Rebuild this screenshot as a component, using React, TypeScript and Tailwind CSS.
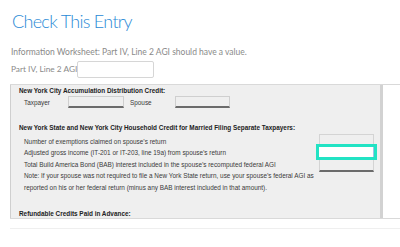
const rows = [
  'Number of exemptions claimed on spouse\u2019s return',
  'Adjusted gross income (IT-201 or IT-203, line 19a) from spouse\u2019s return',
  'Total Build America Bond (BAB) interest included in the spouse\u2019s recomputed federal AGI',
]

function GrayInput({ className }: { className?: string }) {
  return (
    <div
      className={`h-[12px] border border-[#cfcfcf] border-b-2 border-b-[#6b6b6b] bg-[#efefef] ${className ?? ''}`}
    />
  )
}

export default function App() {
  return (
    <div className="h-[247px] w-[400px] overflow-hidden bg-white">
      <h1 className="pl-3 pt-[9px] font-['Lato',sans-serif] text-[18px] font-light leading-[24px] tracking-[-0.7px] text-[#2a8ad6]">
        Check This Entry
      </h1>
      <p className="mt-[14px] pl-[11px] font-['Lato',sans-serif] text-[8.5px] leading-[10px] text-[#8a8a8a]">
        Information Worksheet: Part IV, Line 2 AGI should have a value.
      </p>
      <div className="mt-[4px] flex items-center pl-[11px] font-['Lato',sans-serif] text-[8.3px] text-[#8a8a8a]">
        <span className="w-[66px] whitespace-nowrap">Part IV, Line 2 AGI</span>
        <div className="h-[17px] w-[77px] rounded-[2px] border border-[#d6d6d6] bg-white" />
      </div>

      {/* scroll frame */}
      <div className="ml-[10px] mt-[6px] h-[135px] border-y border-[#d9d9d9]">
        <div className="relative h-full w-[373px] overflow-hidden border-l border-r-[3px] border-l-[#cfcfcf] border-r-[#d2d2d2] bg-[#efefef] font-['Liberation_Sans',Arial,sans-serif] text-[6.4px] leading-[11px] text-[#3a3a3a]">
          <div className="pl-[8px] font-bold text-[#222]">
            New York City Accumulation Distribution Credit:
          </div>
          <div className="flex items-center pl-[13px]">
            <span className="w-[44px]">Taxpayer</span>
            <GrayInput className="w-[56px]" />
            <span className="ml-[6px] w-[45px]">Spouse</span>
            <GrayInput className="w-[55px]" />
          </div>

          <div className="mt-[14px] pl-[8px] font-bold text-[#222]">
            New York State and New York City Household Credit for Married Filing
            Separate Taxpayers:
          </div>
          <div className="flex">
            <div className="w-[308px] whitespace-nowrap pl-[13px] pt-[2.5px] leading-[11.5px]">
              {rows.map((r) => (
                <div key={r}>{r}</div>
              ))}
              <div>
                Note: If your spouse was not required to file a New York State
                return, use your spouse&rsquo;s federal AGI as
              </div>
              <div>
                reported on his or her federal return (minus any BAB interest
                included in that amount).
              </div>
            </div>
            <div className="relative mt-[1px] h-[38px] w-[55px] border border-[#d4d4d4] border-b-2 border-b-[#6b6b6b]">
              <div className="absolute left-[-4px] top-[9px] h-[16px] w-[61px] border-[3px] border-[#22e3c4] bg-white">
                <div className="ml-auto h-full w-px bg-[#9ec3e6]" />
              </div>
            </div>
          </div>

          <div className="mt-[15px] pl-[8px] font-bold text-[#222]">
            Refundable Credits Paid in Advance:
          </div>
        </div>
      </div>
      <div className="ml-[10px] mt-[9px] border-t border-[#efefef]" />
    </div>
  )
}
